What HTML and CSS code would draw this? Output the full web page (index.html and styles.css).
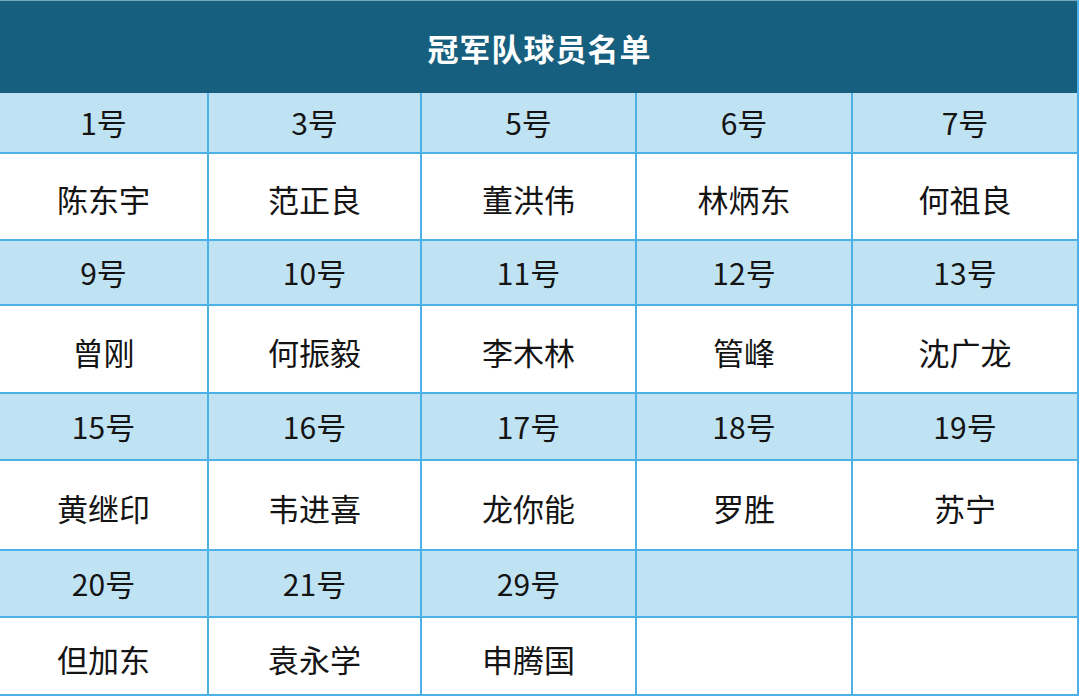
FILE: index.html
```html
<!DOCTYPE html>
<html lang="zh-CN">
<head>
<meta charset="utf-8">
<title>冠军队球员名单</title>
<link rel="stylesheet" href="styles.css">
</head>
<body>
<div class="sheet">
  <div class="title">冠军队球员名单</div>
  <div class="grid">
    <div class="cell num">1号</div><div class="cell num">3号</div><div class="cell num">5号</div><div class="cell num">6号</div><div class="cell num">7号</div>
    <div class="cell name">陈东宇</div><div class="cell name">范正良</div><div class="cell name">董洪伟</div><div class="cell name">林炳东</div><div class="cell name">何祖良</div>
    <div class="cell num">9号</div><div class="cell num">10号</div><div class="cell num">11号</div><div class="cell num">12号</div><div class="cell num">13号</div>
    <div class="cell name">曾刚</div><div class="cell name">何振毅</div><div class="cell name">李木林</div><div class="cell name">管峰</div><div class="cell name">沈广龙</div>
    <div class="cell num">15号</div><div class="cell num">16号</div><div class="cell num">17号</div><div class="cell num">18号</div><div class="cell num">19号</div>
    <div class="cell name">黄继印</div><div class="cell name">韦进喜</div><div class="cell name">龙你能</div><div class="cell name">罗胜</div><div class="cell name">苏宁</div>
    <div class="cell num">20号</div><div class="cell num">21号</div><div class="cell num">29号</div><div class="cell num"></div><div class="cell num"></div>
    <div class="cell name">但加东</div><div class="cell name">袁永学</div><div class="cell name">申腾国</div><div class="cell name"></div><div class="cell name"></div>
  </div>
</div>
</body>
</html>
```

FILE: styles.css
```css
html, body {
  margin: 0;
  padding: 0;
  background: #ffffff;
}
body {
  font-family: "Noto Sans CJK SC", "Noto Sans", sans-serif;
  color: #141414;
}
.sheet {
  width: 1077px;
  border-right: 2px solid #4cb1e6;
}
.title {
  height: 92px;
  border-top: 1px solid #7aa6bb;
  background: #175f7e;
  color: #ffffff;
  font-size: 31px;
  font-weight: 700;
  letter-spacing: 1px;
  display: flex;
  align-items: center;
  justify-content: center;
  padding-left: 2px;
}
.grid {
  display: grid;
  grid-template-columns: 207px 211px 213px 214px 224px;
  grid-template-rows: 59px 85px 63px 86px 65px 88px 65px 76px;
  column-gap: 2px;
  row-gap: 2px;
  padding-bottom: 2px;
  background: #4cb1e6;
}
.cell {
  display: flex;
  align-items: center;
  justify-content: center;
}
.num {
  background: #c0e3f3;
  font-size: 30px;
  padding-bottom: 2px;
}
.name {
  background: #ffffff;
  font-size: 31px;
  padding-top: 4px;
}
```
